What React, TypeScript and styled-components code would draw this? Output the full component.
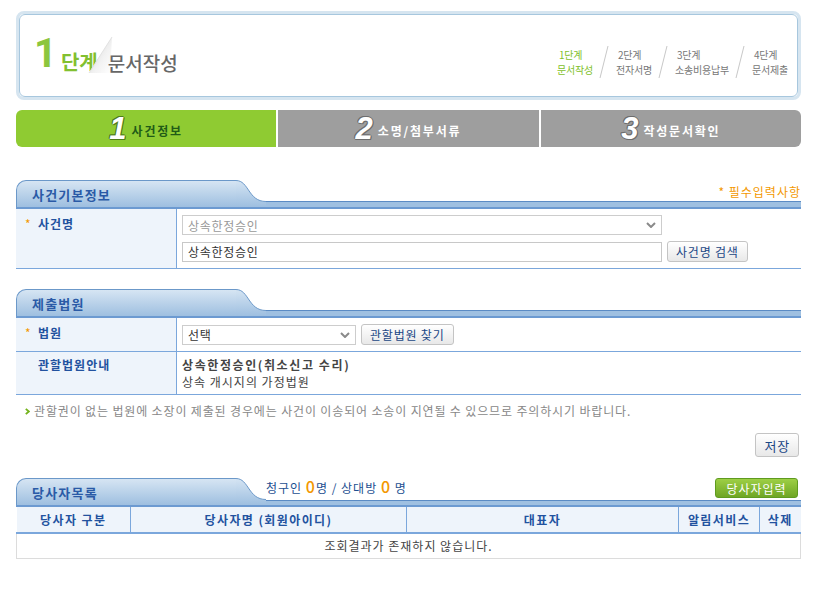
import React from 'react';
import styled, { createGlobalStyle } from 'styled-components';

const GlobalStyle = createGlobalStyle`
  html, body { margin: 0; padding: 0; background: #fff; }
  body {
    font-family: "Noto Sans CJK KR", "Noto Sans", sans-serif;
    font-size: 12px;
    color: #333;
    letter-spacing: 0.8px;
  }
  * { box-sizing: border-box; }
`;

const Page = styled.div`
  width: 785px;
  margin-left: 16px;
  padding-top: 11px;
  padding-bottom: 30px;
`;

/* ---------- step header ---------- */
const StepBox = styled.div`
  height: 89px;
  border: 3px solid #d6e5f0;
  border-radius: 8px;
`;

const StepInner = styled.div`
  height: 100%;
  border: 1px solid #a7c7de;
  border-radius: 6px;
  background: #fff;
  display: flex;
  align-items: center;
  justify-content: space-between;
  padding: 0 9px 0 14px;
`;

const Title = styled.div`
  display: flex;
  align-items: flex-end;
  line-height: 1;
  margin-top: -3px;
  letter-spacing: 0;
`;

const BigNum = styled.span`
  font-family: Roboto, "Liberation Sans", sans-serif;
  font-size: 40px;
  font-weight: 700;
  color: #8cc63e;
  margin-right: 4px;
`;

const StageWord = styled.span`
  font-size: 20px;
  font-weight: 700;
  color: #82c030;
  margin-bottom: 2px;
`;

const Curl = styled.svg`
  margin: 0 -6px 0 -12px;
  flex: none;
`;

const DocTitle = styled.span`
  font-size: 19px;
  font-weight: 500;
  color: #676767;
  margin-bottom: 2px;
`;

const Steps = styled.div`
  display: flex;
  align-items: center;
  gap: 6px;
  margin-top: 12px;
`;

const StepItem = styled.div<{ $active?: boolean }>`
  font-size: 10px;
  line-height: 15px;
  letter-spacing: -0.2px;
  color: ${(p) => (p.$active ? '#7fbf2a' : '#777')};
  padding-left: 1px;
  div:first-child { padding-left: 2px; }
`;

const Slash = () => (
  <svg width="10" height="34" viewBox="0 0 10 34">
    <line x1="9" y1="1" x2="1" y2="33" stroke="#c8c8c8" strokeWidth="1" />
  </svg>
);

/* ---------- progress tabs ---------- */
const TabBar = styled.div`
  margin-top: 10px;
  height: 37px;
  display: flex;
  gap: 2px;
`;

const Tab = styled.div<{ $active?: boolean }>`
  flex: 1;
  display: flex;
  align-items: center;
  justify-content: center;
  background: ${(p) => (p.$active ? '#8fcb32' : '#9e9e9e')};
  &:first-child { border-radius: 6px 0 0 6px; }
  &:last-child { border-radius: 0 6px 6px 0; }
`;

const TabNum = styled.span<{ $active?: boolean }>`
  font-family: "Liberation Sans", Arial, sans-serif;
  font-style: italic;
  font-weight: 700;
  font-size: 31px;
  line-height: 1;
  letter-spacing: 0;
  color: #fff;
  text-shadow: ${(p) => {
    const c = p.$active ? '#4f7c1c' : '#6d6d6d';
    return `1px 0 0 ${c}, -1px 0 0 ${c}, 0 1px 0 ${c}, 0 -1px 0 ${c}, 1px 1px 0 ${c}, -1px -1px 0 ${c}`;
  }};
  margin-right: 5px;
`;

const TabText = styled.span<{ $active?: boolean }>`
  font-size: 12px;
  font-weight: 700;
  letter-spacing: 1.8px;
  color: ${(p) => (p.$active ? '#215b17' : '#fff')};
  margin-top: 3px;
`;

/* ---------- sections ---------- */
const Section = styled.section<{ $mt: number }>`
  margin-top: ${(p) => p.$mt}px;
`;

const SectionHead = styled.div`
  display: flex;
  height: 29px;
  border-bottom: 2px solid #6c9ad1;
`;

const TabLabel = styled.div`
  width: 220px;
  flex: none;
  border: 1px solid #6b98c9;
  border-bottom: none;
  border-right: none;
  border-radius: 10px 0 0 0;
  background: linear-gradient(#d6e5f3, #9ebfe0);
  padding: 6px 0 0 15px;
  font-size: 13px;
  font-weight: 700;
  line-height: 16px;
  letter-spacing: 1.2px;
  color: #2a5aa6;
`;

const HeadRest = styled.div`
  flex: 1;
  display: flex;
  flex-direction: column;
`;

const HeadExtra = styled.div<{ $justify?: string }>`
  flex: 1;
  display: flex;
  align-items: center;
  justify-content: ${(p) => p.$justify || 'flex-end'};
`;

const Bar = styled.div`
  height: 6px;
  border-top: 1px solid #5b8bc4;
  background: #9fc0e1;
`;

const TabCurve = () => (
  <svg width="30" height="27" viewBox="0 0 30 27" style={{ flex: 'none', display: 'block' }}>
    <defs>
      <linearGradient id="tabg" x1="0" y1="0" x2="0" y2="27" gradientUnits="userSpaceOnUse">
        <stop offset="0" stopColor="#d6e5f3" />
        <stop offset="1" stopColor="#9ebfe0" />
      </linearGradient>
    </defs>
    <path d="M0,0.5 C13,0.5 12,21.5 30,21.5 L30,27 L0,27 Z" fill="url(#tabg)" />
    <path d="M0,0.5 C13,0.5 12,21.5 30,21.5" fill="none" stroke="#6b98c9" strokeWidth="1" />
  </svg>
);

const RequiredNote = styled.span`
  font-size: 12px;
  letter-spacing: 1px;
  color: #f39800;
  margin-top: 2px;
`;

const Row = styled.div`
  display: grid;
  grid-template-columns: 161px 1fr;
  border-bottom: 1px solid #7ba7dc;
`;

const LabelCell = styled.div<{ $pt?: number }>`
  background: #eef4fb;
  border-right: 1px solid #7ba7dc;
  padding: ${(p) => p.$pt ?? 8}px 0 0 9px;
  font-size: 12px;
  font-weight: 700;
  letter-spacing: 1px;
  line-height: 14px;
  color: #22529f;
`;

const Star = styled.span`
  display: inline-block;
  width: 13px;
  color: #f39800;
  font-weight: 400;
`;

const FieldCell = styled.div`
  padding: 6px 5px;
  display: flex;
  flex-direction: column;
  gap: 6px;
`;

const FieldLine = styled.div`
  display: flex;
  align-items: center;
  gap: 5px;
`;

const SelectWrap = styled.div<{ $w: number }>`
  position: relative;
  width: ${(p) => p.$w}px;
  height: 20px;
`;

const Select = styled.select<{ $muted?: boolean }>`
  appearance: none;
  width: 100%;
  height: 100%;
  border: 1px solid #cdcdcd;
  background: #fff;
  padding: 0 5px;
  font-family: inherit;
  font-size: 12px;
  letter-spacing: 0.7px;
  color: ${(p) => (p.$muted ? '#999' : '#333')};
  outline: none;
`;

const Chevron = styled.svg`
  position: absolute;
  right: 6px;
  top: 7px;
  pointer-events: none;
`;

const TextInput = styled.input<{ $w: number }>`
  width: ${(p) => p.$w}px;
  height: 20px;
  border: 1px solid #c8c8c8;
  padding: 0 5px;
  font-family: inherit;
  font-size: 12px;
  letter-spacing: 0.7px;
  color: #333;
  outline: none;
`;

const GrayButton = styled.button<{ $h?: number; $fs?: number }>`
  height: ${(p) => p.$h ?? 21}px;
  padding: 0 8px;
  border: 1px solid #c4c4c4;
  border-radius: 3px;
  background: linear-gradient(#ffffff, #e8e8e8);
  font-family: inherit;
  font-size: ${(p) => p.$fs ?? 12}px;
  letter-spacing: 0.8px;
  color: #1b4785;
  cursor: pointer;
  white-space: nowrap;
`;

const InfoCell = styled.div`
  padding: 4px 5px;
  line-height: 17px;
  color: #444;
  letter-spacing: 1px;
`;

const InfoStrong = styled.div`
  font-weight: 700;
  letter-spacing: 1.6px;
  color: #444;
`;

const Note = styled.p`
  margin: 8px 0 0;
  padding-left: 9px;
  display: flex;
  align-items: center;
  gap: 4px;
  font-size: 12px;
  line-height: 16px;
  color: #888;
  letter-spacing: 0.85px;
`;

const SaveRow = styled.div`
  display: flex;
  justify-content: flex-end;
  margin-top: 14px;
  padding-right: 2px;
`;

const Counts = styled.span`
  font-size: 12px;
  letter-spacing: 1px;
  color: #1d4f91;
  margin-top: -6px;
`;

const Zero = styled.span`
  font-size: 16px;
  color: #f39800;
  font-weight: 500;
`;

const GreenButton = styled.button`
  height: 20px;
  width: 83px;
  margin-right: 3px;
  margin-bottom: 2px;
  border: 1px solid #5f9b1f;
  border-radius: 3px;
  background: linear-gradient(#9dcf45, #6fa624);
  color: #fff;
  font-family: inherit;
  font-size: 12px;
  letter-spacing: 1px;
  cursor: pointer;
`;

const ListTable = styled.table`
  width: 100%;
  border-collapse: collapse;
  table-layout: fixed;
  font-size: 12px;
`;

const Th = styled.th`
  height: 26px;
  padding: 0;
  background: #eef4fb;
  border-right: 1px solid #7ba7dc;
  border-bottom: 2px solid #7ba7dc;
  color: #22529f;
  font-weight: 700;
  letter-spacing: 1.4px;
  &:last-child { border-right: none; }
`;

const Td = styled.td`
  height: 25px;
  padding: 0;
  border: 1px solid #dcdcdc;
  border-top: none;
  text-align: center;
  color: #444;
  letter-spacing: 1px;
`;

const Arrow = () => (
  <svg width="5" height="7" viewBox="0 0 5 7">
    <polyline points="0.8,0.8 3.8,3.5 0.8,6.2" fill="none" stroke="#74b31c" strokeWidth="1.8" />
  </svg>
);

const ChevronIcon = () => (
  <Chevron width="10" height="6" viewBox="0 0 10 6">
    <polyline points="1,1 5,5 9,1" fill="none" stroke="#8a8a8a" strokeWidth="2" />
  </Chevron>
);

export default function App() {
  return (
    <>
      <GlobalStyle />
      <Page>
        <StepBox>
          <StepInner>
            <Title>
              <BigNum>1</BigNum>
              <StageWord>단계</StageWord>
              <Curl width="28" height="38" viewBox="0 0 28 38">
                <defs>
                  <linearGradient id="curlg" x1="0" y1="0" x2="1" y2="1">
                    <stop offset="0" stopColor="#cfcfcf" />
                    <stop offset="0.6" stopColor="#f2f2f2" />
                    <stop offset="1" stopColor="#ffffff" />
                  </linearGradient>
                </defs>
                <polygon points="26,1 3,37 24,37" fill="url(#curlg)" />
                <line x1="26" y1="1" x2="3" y2="37" stroke="#e2e2e2" strokeWidth="1" />
              </Curl>
              <DocTitle>문서작성</DocTitle>
            </Title>
            <Steps>
              <StepItem $active>
                <div>1단계</div>
                <div>문서작성</div>
              </StepItem>
              <Slash />
              <StepItem>
                <div>2단계</div>
                <div>전자서명</div>
              </StepItem>
              <Slash />
              <StepItem>
                <div>3단계</div>
                <div>소송비용납부</div>
              </StepItem>
              <Slash />
              <StepItem>
                <div>4단계</div>
                <div>문서제출</div>
              </StepItem>
            </Steps>
          </StepInner>
        </StepBox>

        <TabBar>
          <Tab $active>
            <TabNum $active>1</TabNum>
            <TabText $active>사건정보</TabText>
          </Tab>
          <Tab>
            <TabNum>2</TabNum>
            <TabText>소명/첨부서류</TabText>
          </Tab>
          <Tab>
            <TabNum>3</TabNum>
            <TabText>작성문서확인</TabText>
          </Tab>
        </TabBar>

        <Section $mt={33}>
          <SectionHead>
            <TabLabel>사건기본정보</TabLabel>
            <TabCurve />
            <HeadRest>
              <HeadExtra>
                <RequiredNote>* 필수입력사항</RequiredNote>
              </HeadExtra>
              <Bar />
            </HeadRest>
          </SectionHead>
          <Row>
            <LabelCell>
              <Star>*</Star>사건명
            </LabelCell>
            <FieldCell>
              <SelectWrap $w={480}>
                <Select $muted defaultValue="a">
                  <option value="a">상속한정승인</option>
                </Select>
                <ChevronIcon />
              </SelectWrap>
              <FieldLine>
                <TextInput $w={480} readOnly defaultValue="상속한정승인" />
                <GrayButton>사건명 검색</GrayButton>
              </FieldLine>
            </FieldCell>
          </Row>
        </Section>

        <Section $mt={20}>
          <SectionHead>
            <TabLabel>제출법원</TabLabel>
            <TabCurve />
            <HeadRest>
              <HeadExtra />
              <Bar />
            </HeadRest>
          </SectionHead>
          <Row>
            <LabelCell>
              <Star>*</Star>법원
            </LabelCell>
            <FieldCell>
              <FieldLine>
                <SelectWrap $w={174}>
                  <Select defaultValue="s">
                    <option value="s">선택</option>
                  </Select>
                  <ChevronIcon />
                </SelectWrap>
                <GrayButton>관할법원 찾기</GrayButton>
              </FieldLine>
            </FieldCell>
          </Row>
          <Row>
            <LabelCell $pt={6}>
              <Star />관할법원안내
            </LabelCell>
            <InfoCell>
              <InfoStrong>상속한정승인(취소신고 수리)</InfoStrong>
              <div>상속 개시지의 가정법원</div>
            </InfoCell>
          </Row>
          <Note>
            <Arrow />
            관할권이 없는 법원에 소장이 제출된 경우에는 사건이 이송되어 소송이 지연될 수 있으므로 주의하시기 바랍니다.
          </Note>
          <SaveRow>
            <GrayButton $h={24} $fs={13}>저장</GrayButton>
          </SaveRow>
        </Section>

        <Section $mt={21}>
          <SectionHead>
            <TabLabel>당사자목록</TabLabel>
            <TabCurve />
            <HeadRest>
              <HeadExtra $justify="space-between">
                <Counts>
                  청구인 <Zero>0</Zero>명 / 상대방 <Zero>0</Zero> 명
                </Counts>
                <GreenButton>당사자입력</GreenButton>
              </HeadExtra>
              <Bar />
            </HeadRest>
          </SectionHead>
          <ListTable>
            <colgroup>
              <col style={{ width: 114 }} />
              <col style={{ width: 276 }} />
              <col style={{ width: 272 }} />
              <col style={{ width: 81 }} />
              <col />
            </colgroup>
            <thead>
              <tr>
                <Th>당사자 구분</Th>
                <Th>당사자명 (회원아이디)</Th>
                <Th>대표자</Th>
                <Th>알림서비스</Th>
                <Th>삭제</Th>
              </tr>
            </thead>
            <tbody>
              <tr>
                <Td colSpan={5}>조회결과가 존재하지 않습니다.</Td>
              </tr>
            </tbody>
          </ListTable>
        </Section>
      </Page>
    </>
  );
}
